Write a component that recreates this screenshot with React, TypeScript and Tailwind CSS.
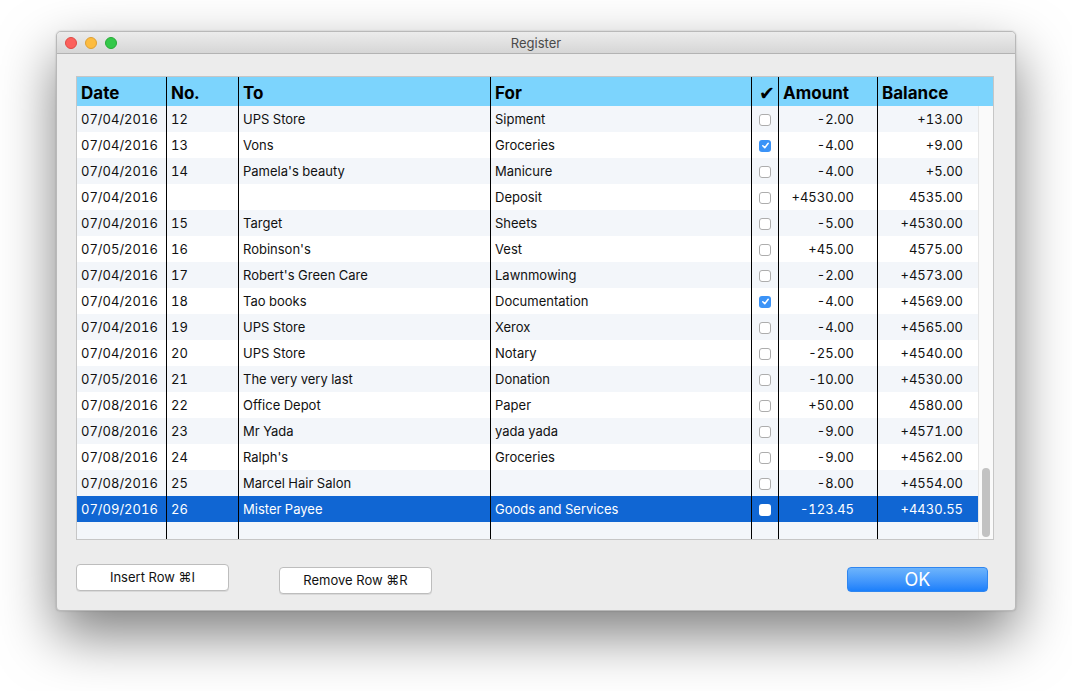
import React from "react";

type Row = {
  date: string;
  no: string;
  to: string;
  forr: string;
  checked?: boolean;
  amount: string;
  balance: string;
  selected?: boolean;
};

const rows: Row[] = [
  { date: "07/04/2016", no: "12", to: "UPS Store", forr: "Sipment", amount: "-2.00", balance: "+13.00" },
  { date: "07/04/2016", no: "13", to: "Vons", forr: "Groceries", checked: true, amount: "-4.00", balance: "+9.00" },
  { date: "07/04/2016", no: "14", to: "Pamela's beauty", forr: "Manicure", amount: "-4.00", balance: "+5.00" },
  { date: "07/04/2016", no: "", to: "", forr: "Deposit", amount: "+4530.00", balance: "4535.00" },
  { date: "07/04/2016", no: "15", to: "Target", forr: "Sheets", amount: "-5.00", balance: "+4530.00" },
  { date: "07/05/2016", no: "16", to: "Robinson's", forr: "Vest", amount: "+45.00", balance: "4575.00" },
  { date: "07/04/2016", no: "17", to: "Robert's Green Care", forr: "Lawnmowing", amount: "-2.00", balance: "+4573.00" },
  { date: "07/04/2016", no: "18", to: "Tao books", forr: "Documentation", checked: true, amount: "-4.00", balance: "+4569.00" },
  { date: "07/04/2016", no: "19", to: "UPS Store", forr: "Xerox", amount: "-4.00", balance: "+4565.00" },
  { date: "07/04/2016", no: "20", to: "UPS Store", forr: "Notary", amount: "-25.00", balance: "+4540.00" },
  { date: "07/05/2016", no: "21", to: "The very very last", forr: "Donation", amount: "-10.00", balance: "+4530.00" },
  { date: "07/08/2016", no: "22", to: "Office Depot", forr: "Paper", amount: "+50.00", balance: "4580.00" },
  { date: "07/08/2016", no: "23", to: "Mr Yada", forr: "yada yada", amount: "-9.00", balance: "+4571.00" },
  { date: "07/08/2016", no: "24", to: "Ralph's", forr: "Groceries", amount: "-9.00", balance: "+4562.00" },
  { date: "07/08/2016", no: "25", to: "Marcel Hair Salon", forr: "", amount: "-8.00", balance: "+4554.00" },
  { date: "07/09/2016", no: "26", to: "Mister Payee", forr: "Goods and Services", amount: "-123.45", balance: "+4430.55", selected: true },
];

function Checkbox({ checked, selected }: { checked?: boolean; selected?: boolean }) {
  if (checked) {
    return (
      <div className="w-[12px] h-[12px] rounded-[3px] bg-[#3b93f7] flex items-center justify-center">
        <svg width="9" height="9" viewBox="0 0 10 10">
          <path d="M2 5.3 L4.2 7.4 L8 2.6" stroke="white" strokeWidth="1.7" fill="none" strokeLinecap="round" strokeLinejoin="round" />
        </svg>
      </div>
    );
  }
  if (selected) {
    return <div className="w-[12px] h-[12px] rounded-[3px] bg-white" />;
  }
  return <div className="w-[12px] h-[12px] rounded-[3px] bg-white border border-[#adadad]" />;
}

function TableRow({ r, idx }: { r: Row; idx: number }) {
  const bg = r.selected ? "bg-[#1066d3] text-white" : idx % 2 === 0 ? "bg-[#f3f6fa] text-[#111]" : "bg-white text-[#111]";
  return (
    <div className={`flex h-[26px] items-center ${bg}`}>
      <div className="w-[90px] h-full border-r border-black pl-[4px] pt-[2px] flex items-center">{r.date}</div>
      <div className="w-[72px] h-full border-r border-black pl-[4px] pt-[2px] flex items-center">{r.no}</div>
      <div className="w-[252px] h-full border-r border-black pl-[4px] pt-[2px] flex items-center">{r.to}</div>
      <div className="w-[261px] h-full border-r border-black pl-[4px] pt-[2px] flex items-center">{r.forr}</div>
      <div className="w-[27px] h-full border-r border-black pt-[1px] flex items-center justify-center">
        <Checkbox checked={r.checked} selected={r.selected} />
      </div>
      <div className="w-[99px] h-full border-r border-black pr-[23px] pt-[2px] flex items-center justify-end">{r.amount}</div>
      <div className="w-[100px] h-full pr-[15px] pt-[2px] flex items-center justify-end">{r.balance}</div>
    </div>
  );
}

export default function App() {
  return (
    <div className="w-[1072px] h-[691px] bg-white overflow-hidden pt-[31px] pl-[56px]" style={{ fontFamily: "Inter, 'Liberation Sans', sans-serif" }}>
      <div className="w-[960px] h-[580px] bg-[#ececec] rounded-t-[5px] rounded-b-[4px] border border-[#b9b9b9] shadow-[0_24px_55px_rgba(0,0,0,0.5),0_0_2px_rgba(0,0,0,0.2)] flex flex-col overflow-hidden">
        {/* Title bar */}
        <div className="relative h-[22px] shrink-0 bg-gradient-to-b from-[#ececec] to-[#d6d6d6] border-b border-[#b3b3b3] flex items-center justify-center pt-[2px]">
          <div className="absolute left-[8px] top-[5px] flex gap-[8px]">
            <div className="w-[12px] h-[12px] rounded-full bg-[#fc605c] border border-[#de4a44]" />
            <div className="w-[12px] h-[12px] rounded-full bg-[#fdbc40] border border-[#dea033]" />
            <div className="w-[12px] h-[12px] rounded-full bg-[#34c84a] border border-[#27aa35]" />
          </div>
          <span className="text-[13px] text-[#4a4a4a]">Register</span>
        </div>

        {/* Content */}
        <div className="flex-1 flex flex-col pl-[19px] pt-[22px]">
          <div className="w-[918px] h-[464px] border border-[#c6c6c6] flex flex-col bg-[#f3f6fa] text-[13px] tabular-nums">
            {/* Header */}
            <div className="flex h-[29px] shrink-0 bg-[#7cd4fd] text-black font-bold text-[17px] items-stretch">
              <div className="w-[90px] border-r border-black pl-[4px] flex items-center pt-[4px]">Date</div>
              <div className="w-[72px] border-r border-black pl-[4px] flex items-center pt-[4px]">No.</div>
              <div className="w-[252px] border-r border-black pl-[4px] flex items-center pt-[4px]">To</div>
              <div className="w-[261px] border-r border-black pl-[4px] flex items-center pt-[4px]">For</div>
              <div className="w-[27px] border-r border-black flex items-center justify-center pt-[4px] pl-[4px] text-[19px]" style={{ fontFamily: "'DejaVu Sans', sans-serif" }}>✔</div>
              <div className="w-[99px] border-r border-black pl-[4px] flex items-center pt-[4px]">Amount</div>
              <div className="w-[100px] pl-[4px] flex items-center pt-[4px]">Balance</div>
              <div className="w-[15px]" />
            </div>
            {/* Body */}
            <div className="flex flex-1 min-h-0">
              <div className="w-[901px] flex flex-col">
                {rows.map((r, i) => (
                  <TableRow key={i} r={r} idx={i} />
                ))}
                <div className="flex flex-1 bg-[#f3f6fa]">
                  <div className="w-[90px] border-r border-black" />
                  <div className="w-[72px] border-r border-black" />
                  <div className="w-[252px] border-r border-black" />
                  <div className="w-[261px] border-r border-black" />
                  <div className="w-[27px] border-r border-black" />
                  <div className="w-[99px] border-r border-black" />
                  <div className="w-[100px]" />
                </div>
              </div>
              <div className="w-[15px] bg-[#fafafa] border-l border-[#e6e6e6] flex flex-col justify-end items-center pb-[2px]">
                <div className="w-[8px] h-[69px] rounded-full bg-[#c2c2c2]" />
              </div>
            </div>
          </div>

          {/* Buttons */}
          <div className="flex items-start mt-[24px] text-[13px] text-[#111]">
            <button className="w-[153px] h-[27px] bg-white border border-[#bdbdbd] rounded-[4px] shadow-[0_1px_0_rgba(0,0,0,0.08)] flex items-center justify-center">
              Insert Row ⌘I
            </button>
            <button className="ml-[50px] mt-[3px] w-[153px] h-[27px] bg-white border border-[#bdbdbd] rounded-[4px] shadow-[0_1px_0_rgba(0,0,0,0.08)] flex items-center justify-center">
              Remove Row ⌘R
            </button>
            <button className="ml-[415px] mt-[3px] w-[141px] h-[25px] rounded-[4px] bg-gradient-to-b from-[#6db4fb] to-[#1a7ffb] border border-[#2f86f0] text-white text-[18px] flex items-center justify-center">
              OK
            </button>
          </div>
        </div>
      </div>
    </div>
  );
}
